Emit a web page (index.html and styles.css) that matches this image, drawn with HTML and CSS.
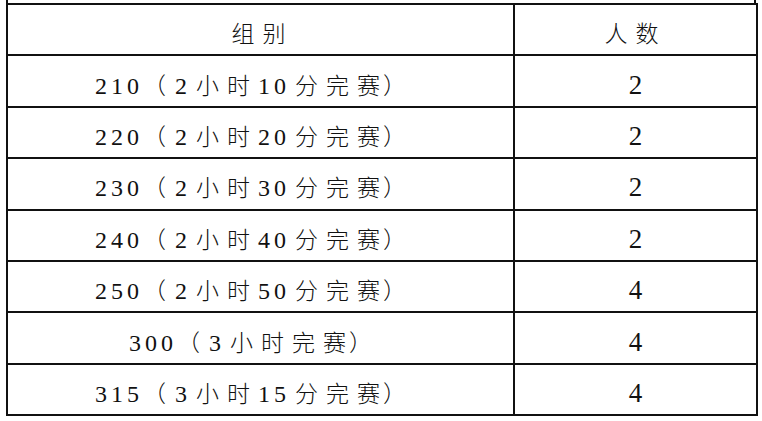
FILE: index.html
```html
<!DOCTYPE html>
<html lang="zh">
<head>
<meta charset="utf-8">
<link rel="stylesheet" href="styles.css">
</head>
<body>
<div class="wrap">
  <div class="stub"></div>
  <table class="tbl">
    <colgroup><col class="c1"><col class="c2"></colgroup>
    <tr class="head"><td class="g">组别</td><td class="g">人数</td></tr>
    <tr><td><span class="d">210</span><span class="p">（</span><span class="d">2</span>小时<span class="d">10</span>分完<span class="l">赛</span>）</td><td class="n">2</td></tr>
    <tr><td><span class="d">220</span><span class="p">（</span><span class="d">2</span>小时<span class="d">20</span>分完<span class="l">赛</span>）</td><td class="n">2</td></tr>
    <tr><td><span class="d">230</span><span class="p">（</span><span class="d">2</span>小时<span class="d">30</span>分完<span class="l">赛</span>）</td><td class="n">2</td></tr>
    <tr><td><span class="d">240</span><span class="p">（</span><span class="d">2</span>小时<span class="d">40</span>分完<span class="l">赛</span>）</td><td class="n">2</td></tr>
    <tr><td><span class="d">250</span><span class="p">（</span><span class="d">2</span>小时<span class="d">50</span>分完<span class="l">赛</span>）</td><td class="n">4</td></tr>
    <tr><td><span class="d">300</span><span class="p">（</span><span class="d">3</span>小时完<span class="l">赛</span>）</td><td class="n">4</td></tr>
    <tr><td><span class="d">315</span><span class="p">（</span><span class="d">3</span>小时<span class="d">15</span>分完<span class="l">赛</span>）</td><td class="n">4</td></tr>
  </table>
</div>
</body>
</html>
```
FILE: styles.css
```css
html, body {
  margin: 0;
  padding: 0;
  background: #fff;
}
.wrap {
  margin-left: 6px;
  width: 750px;
}
.stub {
  height: 3px;
  border-left: 2px solid #111;
  border-right: 2px solid #111;
  box-sizing: border-box;
}
.tbl {
  width: 750px;
  border-collapse: collapse;
  table-layout: fixed;
  color: #111;
}
.c1 { width: 507px; }
.c2 { width: 243px; }
.tbl td {
  border: 2px solid #111;
  height: 51.4px;
  padding: 0;
  text-align: center;
  vertical-align: middle;
  font-family: "Noto Sans CJK SC", sans-serif;
  font-weight: 300;
  font-size: 23px;
  letter-spacing: 8px;
  line-height: 1;
  padding-top: 8px;
  box-sizing: border-box;
}
.tbl tr.head td {
  padding-top: 6px;
}
.tbl td:first-child {
  padding-right: 12px;
}
.tbl tr.head td:first-child {
  padding-right: 0;
  padding-left: 4px;
}
.d {
  font-family: "Liberation Serif", serif;
  font-weight: 400;
  font-size: 24px;
  letter-spacing: 4px;
  margin-right: 5px;
}
.p {
  letter-spacing: 0;
  margin-left: -5px;
  margin-right: 9px;
}
.l {
  letter-spacing: 3px;
}
.tbl td.n {
  font-family: "Liberation Serif", serif;
  font-size: 27px;
  font-weight: 400;
  letter-spacing: 0;
}
.g {
  letter-spacing: 8px;
}
```
